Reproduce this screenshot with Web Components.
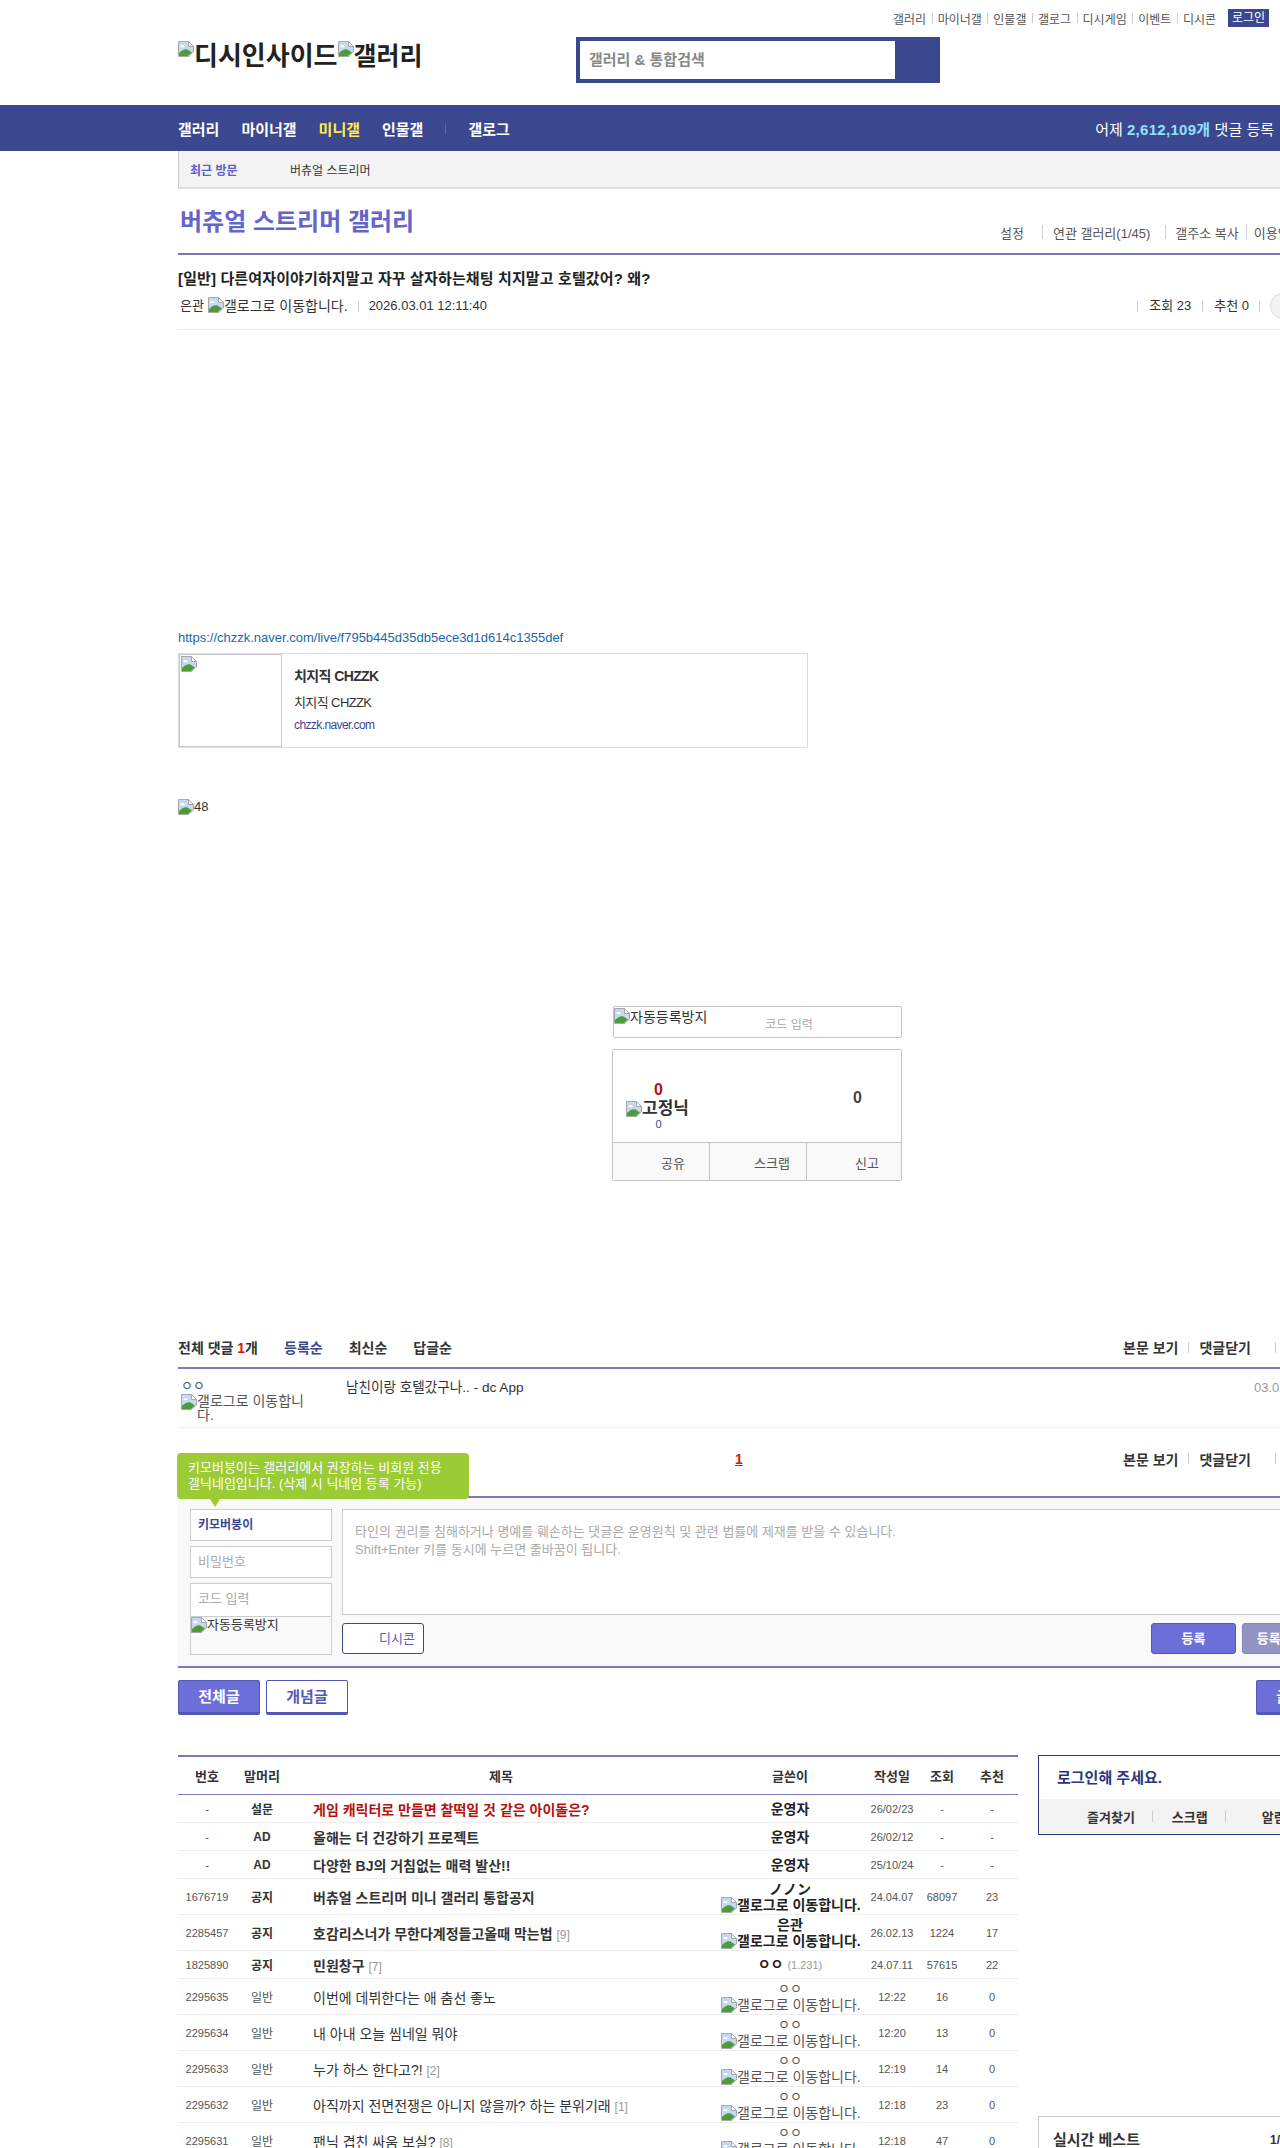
<!DOCTYPE html>
<html lang="ko">
<head>
<meta charset="utf-8">
<title>버츄얼 스트리머 갤러리</title>
<style>
    html, body {
        margin: 0;
        width: 1280px;
        height: 2148px;
        overflow: hidden;
        background: #fff;
    }
    body {
        font-family: "Liberation Sans", "Noto Sans CJK KR", sans-serif;
        font-size: 12px;
        color: #333;
    }
    main {
        display: block;
        width: 1160px;
        margin-left: 178px;
    }
</style>
</head>
<body>

<dc-header></dc-header>
<dc-nav></dc-nav>
<main>
    <dc-recent></dc-recent>
    <dc-gall-title></dc-gall-title>
    <dc-post></dc-post>
    <dc-comments></dc-comments>
    <dc-comment-form></dc-comment-form>
    <dc-tabs></dc-tabs>
    <dc-board>
        <dc-list>
            <dc-row no="-" head="설문" writer="운영자" date="26/02/23" view="-" rec="-" type="survey">게임 캐릭터로 만들면 찰떡일 것 같은 아이돌은?</dc-row>
            <dc-row no="-" head="AD" writer="운영자" date="26/02/12" view="-" rec="-" type="notice">올해는 더 건강하기 프로젝트</dc-row>
            <dc-row no="-" head="AD" writer="운영자" date="25/10/24" view="-" rec="-" type="notice">다양한 BJ의 거침없는 매력 발산!!</dc-row>
            <dc-row no="1676719" head="공지" writer="ノノン" gallog date="24.04.07" view="68097" rec="23" type="notice">버츄얼 스트리머 미니 갤러리 통합공지</dc-row>
            <dc-row no="2285457" head="공지" writer="은관" gallog date="26.02.13" view="1224" rec="17" type="notice" reply="9">호감리스너가 무한다계정들고올때 막는법</dc-row>
            <dc-row no="1825890" head="공지" writer="ㅇㅇ" ip="(1.231)" date="24.07.11" view="57615" rec="22" type="notice" reply="7">민원창구</dc-row>
            <dc-row no="2295635" head="일반" writer="ㅇㅇ" gallog date="12:22" view="16" rec="0">이번에 데뷔한다는 애 춤선 좋노</dc-row>
            <dc-row no="2295634" head="일반" writer="ㅇㅇ" gallog date="12:20" view="13" rec="0">내 아내 오늘 씸네일 뭐야</dc-row>
            <dc-row no="2295633" head="일반" writer="ㅇㅇ" gallog date="12:19" view="14" rec="0" reply="2">누가 하스 한다고?!</dc-row>
            <dc-row no="2295632" head="일반" writer="ㅇㅇ" gallog date="12:18" view="23" rec="0" reply="1">아직까지 전면전쟁은 아니지 않을까? 하는 분위기래</dc-row>
            <dc-row no="2295631" head="일반" writer="ㅇㅇ" gallog date="12:18" view="47" rec="0" reply="8">팬닉 겹친 싸움 보실?</dc-row>
        </dc-list>
        <dc-side slot="side"></dc-side>
    </dc-board>
</main>

<script>
// chrome's broken image picture, alt text sits next to it
class BrokenImg extends HTMLElement {

    constructor(){
        super();
        this.attachShadow({ mode : 'open' });
    }

    connectedCallback(){
        this.shadowRoot.innerHTML = `
            <style>
                :host{
                    display: inline-block;
                }
                svg{
                    float: left;
                    width: 16px;
                    height: 16px;
                }
            </style>
            <svg viewBox="0 0 16 16">
                <path d="M0.5 0.5H10.5L15.5 5.5V11L11 15.5H0.5Z" fill="#c5d8f5" stroke="#a8a8a8"/>
                <path d="M10.5 0.5V5.5H15.5Z" fill="#fff" stroke="#a8a8a8"/>
                <path d="M2 5.5c1-2 3.5-2 5 0c-1 .8-4 1-5 0z" fill="#fff"/>
                <path d="M1 15V12C4 9 7 7.5 9.5 8.5L14 11.5L10 15Z" fill="#4c9c38"/>
                <path d="M11 16L16 11V16Z" fill="#fff"/>
            </svg><slot></slot>
        `;
    }
}
customElements.define('dc-broken', BrokenImg);


class Header extends HTMLElement {

    constructor(){
        super();
        this.attachShadow({ mode : 'open' });
        this.shadowRoot.innerHTML = `
            <style>
                :host{
                    display: block;
                    height: 105px;
                    padding-left: 178px;
                    box-sizing: border-box;
                }
                .util{
                    display: flex;
                    justify-content: flex-end;
                    align-items: center;
                    width: 1091px;
                    height: 18px;
                    padding-top: 9px;
                    font-size: 12px;
                    color: #555;
                }
                .util span + span{
                    margin-left: 5.5px;
                    padding-left: 6px;
                    background: linear-gradient(#ccc, #ccc) left center / 1px 10px no-repeat;
                }
                .login{
                    margin-left: 12px;
                    width: 41px;
                    height: 18px;
                    line-height: 18px;
                    text-align: center;
                    background: #3b4890;
                    color: #fff;
                }
                .row{
                    display: flex;
                    margin-top: 10px;
                }
                .logo{
                    width: 398px;
                    font-size: 25px;
                    line-height: 30px;
                    color: #222;
                    padding-top: 4px;
                    white-space: nowrap;
                    font-weight: bold;
                }
                .logo .main{
                    font-size: 26px;
                }
                .search{
                    display: flex;
                    width: 364px;
                    height: 46px;
                    box-sizing: border-box;
                    border: 4px solid #3b4890;
                    background: #3b4890;
                }
                .input{
                    width: 315px;
                    background: #fff;
                    padding-left: 9px;
                    box-sizing: border-box;
                    font-size: 15px;
                    font-weight: bold;
                    line-height: 38px;
                    color: #888;
                }
            </style>
            <div class="util">
                <span>갤러리</span><span>마이너갤</span><span>인물갤</span><span>갤로그</span><span>디시게임</span><span>이벤트</span><span>디시콘</span>
                <div class="login">로그인</div>
            </div>
            <div class="row">
                <div class="logo"><dc-broken class="main">디시인사이드</dc-broken><dc-broken>갤러리</dc-broken></div>
                <div class="search"><div class="input">갤러리 &amp; 통합검색</div></div>
            </div>
        `;
    }
}
customElements.define('dc-header', Header);


class Nav extends HTMLElement {

    constructor(){
        super();
        this.attachShadow({ mode : 'open' });
        this.shadowRoot.innerHTML = `
            <style>
                :host{
                    display: flex;
                    align-items: center;
                    height: 46px;
                    padding-left: 178px;
                    background: #3b4890;
                    color: #fff;
                    font-size: 15px;
                    font-weight: bold;
                    white-space: nowrap;
                }
                .menu{
                    display: flex;
                    align-items: center;
                    gap: 22px;
                }
                .on{
                    color: #ffec4b;
                }
                .sep{
                    width: 1px;
                    height: 11px;
                    background: #5a66a8;
                }
                .total{
                    margin-left: auto;
                    margin-right: 6px;
                    font-size: 15px;
                    font-weight: normal;
                }
                .total b{
                    color: #8fe3ff;
                    letter-spacing: .3px;
                }
            </style>
            <div class="menu">
                <span>갤러리</span><span>마이너갤</span><span class="on">미니갤</span><span>인물갤</span>
                <i class="sep"></i>
                <span>갤로그</span>
            </div>
            <div class="total">어제 <b>2,612,109개</b> 댓글 등록</div>
        `;
    }
}
customElements.define('dc-nav', Nav);


class Recent extends HTMLElement {

    constructor(){
        super();
        this.attachShadow({ mode : 'open' });
        this.shadowRoot.innerHTML = `
            <style>
                :host{
                    display: flex;
                    align-items: center;
                    height: 36px;
                    background: #f3f3f3;
                    border-left: 1px solid #ccc;
                    border-bottom: 2px solid #ddd;
                    font-size: 12px;
                }
                b{
                    width: 100px;
                    padding-left: 11px;
                    color: #5b5dc9;
                }
            </style>
            <b>최근 방문</b><span>버츄얼 스트리머</span>
        `;
    }
}
customElements.define('dc-recent', Recent);


class GallTitle extends HTMLElement {

    constructor(){
        super();
        this.attachShadow({ mode : 'open' });
        this.shadowRoot.innerHTML = `
            <style>
                :host{
                    display: flex;
                    height: 64px;
                    padding-left: 2px;
                    border-bottom: 2px solid #7b79b8;
                    white-space: nowrap;
                }
                h2{
                    margin: 17px 0 0;
                    font-size: 24px;
                    line-height: 32px;
                    color: #6465c9;
                }
                .links{
                    display: flex;
                    align-items: center;
                    align-self: flex-end;
                    height: 12px;
                    margin-bottom: 15px;
                    margin-left: auto;
                    width: 338px;
                    font-size: 13px;
                    color: #555;
                }
                i{
                    width: 1px;
                    height: 14px;
                    background: #ccc;
                    margin: 0 9px;
                }
            </style>
            <h2>버츄얼 스트리머 갤러리</h2>
            <div class="links">
                <span style="margin-right:9px">설정</span><i style="margin-right:10px"></i><span>연관 갤러리(1/45)</span><i style="margin-left:15px"></i><span>갤주소 복사</span><i style="margin:0 7px"></i><span>이용안내</span>
            </div>
        `;
    }
}
customElements.define('dc-gall-title', GallTitle);


class LinkCard extends HTMLElement {

    constructor(){
        super();
        this.attachShadow({ mode : 'open' });
        this.shadowRoot.innerHTML = `
            <style>
                :host{
                    display: flex;
                    width: 630px;
                    height: 95px;
                    box-sizing: border-box;
                    border: 1px solid #ddd;
                }
                .thumb{
                    width: 103px;
                    box-sizing: border-box;
                    border: 1px solid #c8c8c8;
                    padding: 1px;
                }
                .txt{
                    padding-left: 12px;
                    letter-spacing: -0.6px;
                }
                .t{
                    margin-top: 13px;
                    font-size: 14px;
                    font-weight: bold;
                    line-height: 18px;
                }
                .d{
                    margin-top: 9px;
                    font-size: 13px;
                    line-height: 18px;
                    color: #333;
                }
                .u{
                    margin-top: 4px;
                    font-size: 12px;
                    line-height: 18px;
                    color: #3b4890;
                }
            </style>
            <div class="thumb"><dc-broken></dc-broken></div>
            <div class="txt">
                <div class="t">치지직 CHZZK</div>
                <div class="d">치지직 CHZZK</div>
                <div class="u">chzzk.naver.com</div>
            </div>
        `;
    }
}
customElements.define('dc-link-card', LinkCard);


class VoteBox extends HTMLElement {

    constructor(){
        super();
        this.attachShadow({ mode : 'open' });
        this.shadowRoot.innerHTML = `
            <style>
                :host{
                    display: block;
                    width: 290px;
                    margin-left: 434px;
                }
                .code{
                    display: flex;
                    height: 32px;
                    box-sizing: border-box;
                    margin-left: 1px;
                    border: 1px solid #c4c4c4;
                    border-radius: 2px;
                    font-size: 14px;
                    line-height: 18px;
                    white-space: nowrap;
                }
                .code dc-broken{
                    margin-top: 1px;
                    height: 18px;
                }
                .code em{
                    margin: 9px 0 0 58px;
                    font-style: normal;
                    font-size: 12px;
                    color: #aaa;
                }
                .vote{
                    margin-top: 11px;
                    height: 132px;
                    box-sizing: border-box;
                    border: 1px solid #c4c4c4;
                    border-radius: 2px;
                }
                .nums{
                    display: flex;
                    height: 93px;
                    box-sizing: border-box;
                    border-bottom: 1px solid #c4c4c4;
                }
                .up{
                    width: 100px;
                    padding-left: 13px;
                    box-sizing: border-box;
                    text-align: center;
                    white-space: nowrap;
                }
                .up b{
                    display: block;
                    margin-top: 30px;
                    font-size: 16px;
                    line-height: 20px;
                    color: #b5120d;
                    padding-right: 22px;
                }
                .up dc-broken{
                    display: block;
                    margin-top: 1px;
                    font-size: 17px;
                    font-weight: bold;
                    line-height: 16px;
                    text-align: left;
                }
                .up small{
                    display: block;
                    font-size: 11px;
                    line-height: 14px;
                    color: #3b4890;
                    padding-right: 22px;
                }
                .down{
                    margin: 38px 0 0 140px;
                    font-size: 16px;
                    font-weight: bold;
                    line-height: 20px;
                    color: #444;
                }
                .btns{
                    display: flex;
                    height: 37px;
                    background: #f9f9f9;
                    font-size: 13px;
                    line-height: 41px;
                    color: #555;
                }
                .btns span{
                    box-sizing: border-box;
                    text-align: right;
                }
                .btns span + span{
                    border-left: 1px solid #c4c4c4;
                }
            </style>
            <div class="code"><dc-broken>자동등록방지</dc-broken><em>코드 입력</em></div>
            <div class="vote">
                <div class="nums">
                    <div class="up">
                        <b>0</b>
                        <dc-broken>고정닉</dc-broken>
                        <small>0</small>
                    </div>
                    <div class="down">0</div>
                </div>
                <div class="btns">
                    <span style="width:96px;padding-right:24px">공유</span>
                    <span style="width:97px;padding-right:16px">스크랩</span>
                    <span style="width:95px;padding-right:22px">신고</span>
                </div>
            </div>
        `;
    }
}
customElements.define('dc-vote', VoteBox);


class Post extends HTMLElement {

    constructor(){
        super();
        this.attachShadow({ mode : 'open' });
        this.shadowRoot.innerHTML = `
            <style>
                :host{
                    display: block;
                }
                h3{
                    margin: 15px 0 0;
                    font-size: 15px;
                    line-height: 18px;
                    letter-spacing: .13px;
                    color: #222;
                    white-space: nowrap;
                }
                .meta{
                    display: flex;
                    align-items: center;
                    height: 20px;
                    margin-top: 8px;
                    padding-left: 2px;
                    padding-bottom: 13px;
                    border-bottom: 1px solid #eee;
                    font-size: 13px;
                    line-height: 18px;
                    white-space: nowrap;
                }
                .meta i{
                    width: 1px;
                    height: 11px;
                    background: #ccc;
                    margin: 0 10px;
                }
                .meta .wide{
                    margin: 0 11px;
                }
                .meta dc-broken{
                    margin-left: 4px;
                    font-size: 14px;
                }
                .right{
                    display: flex;
                    align-items: center;
                    margin-left: auto;
                    padding-right: 42px;
                }
                .round{
                    width: 24px;
                    height: 24px;
                    border: 1px solid #ddd;
                    border-radius: 50%;
                    background: #f3f3f3;
                    flex: none;
                }
                .link{
                    margin-top: 300px;
                    font-size: 13px;
                    line-height: 16px;
                    color: #1a66ae;
                }
                dc-link-card{
                    margin-top: 7px;
                }
                .img48{
                    margin-top: 51px;
                    height: 16px;
                    font-size: 13px;
                    line-height: 16px;
                }
                dc-vote{
                    margin-top: 191px;
                }
            </style>
            <h3>[일반] 다른여자이야기하지말고 자꾸 살자하는채팅 치지말고 호텔갔어? 왜?</h3>
            <div class="meta">
                <span>은관</span><dc-broken>갤로그로 이동합니다.</dc-broken><i></i><span>2026.03.01 12:11:40</span>
                <div class="right"><i class="wide"></i><span>조회 23</span><i class="wide"></i><span>추천 0</span><i></i><div class="round"></div></div>
            </div>
            <div class="link">https://chzzk.naver.com/live/f795b445d35db5ece3d1d614c1355def</div>
            <dc-link-card></dc-link-card>
            <div class="img48"><dc-broken>48</dc-broken></div>
            <dc-vote></dc-vote>
        `;
    }
}
customElements.define('dc-post', Post);


class Comments extends HTMLElement {

    constructor(){
        super();
        this.attachShadow({ mode : 'open' });
        this.shadowRoot.innerHTML = `
            <style>
                :host{
                    display: block;
                    margin-top: 152px;
                }
                .head{
                    display: flex;
                    align-items: center;
                    height: 28px;
                    padding-bottom: 6px;
                    border-bottom: 2px solid #7b79b8;
                    font-size: 14px;
                    font-weight: bold;
                    white-space: nowrap;
                }
                .head em{
                    font-style: normal;
                    color: #d31900;
                }
                .sort{
                    margin-left: 26px;
                }
                .blue{
                    color: #3b4890;
                }
                .tools{
                    display: flex;
                    align-items: center;
                    margin-left: auto;
                    width: 215px;
                }
                .tools i{
                    width: 1px;
                    height: 11px;
                    background: #ccc;
                    margin: 0 10px;
                    flex: none;
                }
                .row{
                    display: flex;
                    height: 58px;
                    border-bottom: 1px solid #eee;
                    white-space: nowrap;
                }
                .nick{
                    width: 125px;
                    flex: none;
                    box-sizing: border-box;
                    padding: 9px 0 0 3px;
                    font-size: 13px;
                    line-height: 16px;
                    white-space: normal;
                    color: #555;
                }
                .nick dc-broken{
                    font-size: 14px;
                    line-height: 14px;
                    display: block;
                    width: 124px;
                }
                .txt{
                    flex: none;
                    width: 908px;
                    padding: 11px 0 0 43px;
                    font-size: 13.6px;
                    line-height: 16px;
                }
                .date{
                    margin-top: 11px;
                    font-size: 13px;
                    line-height: 16px;
                    color: #999;
                }
                .bar{
                    display: flex;
                    align-items: center;
                    height: 61px;
                    padding-bottom: 7px;
                    font-size: 14px;
                    font-weight: bold;
                    white-space: nowrap;
                }
                .page{
                    margin-left: 557px;
                    color: #d31900;
                    text-decoration: underline;
                }
            </style>
            <div class="head">
                <span>전체 댓글 <em>1</em>개</span>
                <span class="sort blue">등록순</span><span class="sort">최신순</span><span class="sort">답글순</span>
                <div class="tools"><span>본문 보기</span><i></i><span>댓글닫기</span><i style="margin-left:24px"></i></div>
            </div>
            <div class="row">
                <div class="nick">ㅇㅇ<dc-broken>갤로그로 이동합니다.</dc-broken></div>
                <div class="txt">남친이랑 호텔갔구나.. - dc App</div>
                <div class="date">03.01 12:30:11</div>
            </div>
            <div class="bar">
                <span class="page">1</span>
                <div class="tools"><span>본문 보기</span><i></i><span>댓글닫기</span><i style="margin-left:24px"></i></div>
            </div>
        `;
    }
}
customElements.define('dc-comments', Comments);


class CommentForm extends HTMLElement {

    constructor(){
        super();
        this.attachShadow({ mode : 'open' });
        this.shadowRoot.innerHTML = `
            <style>
                :host{
                    display: flex;
                    position: relative;
                    height: 157px;
                    padding: 11px 0 0 12px;
                    background: #f9f9f9;
                    border-top: 2px solid #7b79b8;
                    border-bottom: 2px solid #7b79b8;
                    font-size: 13px;
                    white-space: nowrap;
                }
                .tip{
                    position: absolute;
                    left: -1px;
                    top: -45px;
                    width: 292px;
                    height: 46px;
                    box-sizing: border-box;
                    padding: 7px 11px;
                    background: #9bcb35;
                    border-radius: 4px;
                    color: #fff;
                    font-size: 13px;
                    line-height: 16px;
                }
                .tip::after{
                    content: "";
                    position: absolute;
                    left: 33px;
                    top: 46px;
                    border: 5px solid transparent;
                    border-top: 8px solid #9bcb35;
                    border-bottom: 0;
                }
                .left{
                    width: 142px;
                    flex: none;
                }
                .field{
                    height: 32px;
                    box-sizing: border-box;
                    margin-bottom: 5px;
                    padding-left: 7px;
                    background: #fff;
                    border: 1px solid #ccc;
                    line-height: 30px;
                    color: #aaa;
                }
                .field.nick{
                    color: #3b4890;
                    font-size: 12px;
                    font-weight: bold;
                }
                .field.code{
                    margin: 0;
                    height: 33px;
                    border-bottom: 0;
                }
                .captcha{
                    height: 39px;
                    box-sizing: border-box;
                    border: 1px solid #ccc;
                    line-height: 16px;
                }
                .right{
                    flex: none;
                    width: 994px;
                    margin-left: 10px;
                }
                .area{
                    height: 106px;
                    box-sizing: border-box;
                    padding: 13px 12px;
                    background: #fff;
                    border: 1px solid #ccc;
                    line-height: 18px;
                    color: #aaa;
                }
                .btns{
                    display: flex;
                    align-items: flex-start;
                    margin-top: 8px;
                }
                .dccon{
                    width: 82px;
                    height: 31px;
                    box-sizing: border-box;
                    padding-left: 36px;
                    background: #fff;
                    border: 1px solid #3b4890;
                    border-radius: 3px;
                    line-height: 29px;
                    color: #5b5dc9;
                }
                .submit{
                    width: 85px;
                    height: 31px;
                    box-sizing: border-box;
                    background: #6d6fd8;
                    border: 1px solid #5557b4;
                    border-radius: 3px;
                    line-height: 29px;
                    text-align: center;
                    color: #fff;
                    font-weight: bold;
                    margin-left: 6px;
                }
                .submit.first{
                    margin-left: 727px;
                }
                .submit.dim{
                    background: #9393c4;
                    border-color: #8585bb;
                }
            </style>
            <div class="tip">키모버붕이는 갤러리에서 권장하는 비회원 전용<br>갤닉네임입니다. (삭제 시 닉네임 등록 가능)</div>
            <div class="left">
                <div class="field nick">키모버붕이</div>
                <div class="field">비밀번호</div>
                <div class="field code">코드 입력</div>
                <div class="captcha"><dc-broken>자동등록방지</dc-broken></div>
            </div>
            <div class="right">
                <div class="area">타인의 권리를 침해하거나 명예를 훼손하는 댓글은 운영원칙 및 관련 법률에 제재를 받을 수 있습니다.<br>Shift+Enter 키를 동시에 누르면 줄바꿈이 됩니다.</div>
                <div class="btns">
                    <div class="dccon">디시콘</div>
                    <div class="submit first">등록</div>
                    <div class="submit dim">등록+개념</div>
                </div>
            </div>
        `;
    }
}
customElements.define('dc-comment-form', CommentForm);


class Tabs extends HTMLElement {

    constructor(){
        super();
        this.attachShadow({ mode : 'open' });
        this.shadowRoot.innerHTML = `
            <style>
                :host{
                    display: flex;
                    gap: 6px;
                    margin-top: 12px;
                    font-size: 15px;
                    font-weight: bold;
                }
                div{
                    width: 82px;
                    height: 35px;
                    box-sizing: border-box;
                    border: 1px solid #5557b4;
                    border-bottom-width: 3px;
                    border-radius: 2px;
                    background: #6d6fd8;
                    color: #fff;
                    line-height: 31px;
                    text-align: center;
                    white-space: nowrap;
                }
                .off{
                    background: #fff;
                    color: #5557b4;
                }
                .write{
                    margin-left: 902px;
                }
            </style>
            <div>전체글</div><div class="off">개념글</div><div class="write">글쓰기</div>
        `;
    }
}
customElements.define('dc-tabs', Tabs);


class Board extends HTMLElement {

    constructor(){
        super();
        this.attachShadow({ mode : 'open' });
        this.shadowRoot.innerHTML = `
            <style>
                :host{
                    display: flex;
                    gap: 20px;
                    margin-top: 40px;
                }
                .list{
                    flex: none;
                    width: 840px;
                }
            </style>
            <div class="list"><slot></slot></div>
            <slot name="side"></slot>
        `;
    }
}
customElements.define('dc-board', Board);


class List extends HTMLElement {

    constructor(){
        super();
        this.attachShadow({ mode : 'open' });
        this.shadowRoot.innerHTML = `
            <style>
                :host{
                    display: block;
                    border-top: 2px solid #7b79b8;
                }
                .head{
                    display: grid;
                    grid-template-columns: 58px 52px 426px 152px 52px 48px 52px;
                    align-items: center;
                    height: 37px;
                    border-bottom: 1px solid #7b79b8;
                    font-size: 13px;
                    font-weight: bold;
                    text-align: center;
                    color: #333;
                }
            </style>
            <div class="head"><span>번호</span><span>말머리</span><span>제목</span><span>글쓴이</span><span>작성일</span><span>조회</span><span>추천</span></div>
            <slot></slot>
        `;
    }
}
customElements.define('dc-list', List);


class Row extends HTMLElement {

    constructor(){
        super();
        this.attachShadow({ mode : 'open' });
    }

    connectedCallback(){
        this.render();
    }

    render() {
        const type = this.getAttribute('type') || '';
        const reply = this.getAttribute('reply');
        const ip = this.getAttribute('ip');
        const bold = type !== '';
        const tall = this.hasAttribute('gallog');

        this.shadowRoot.innerHTML = `
            <style>
                :host{
                    display: grid;
                    grid-template-columns: 58px 52px 426px 152px 52px 48px 52px;
                    align-items: center;
                    height: ${tall ? 35 : 27}px;
                    border-bottom: 1px solid #eee;
                    font-size: 11px;
                    text-align: center;
                    white-space: nowrap;
                    color: #555;
                }
                .head{
                    font-size: 12px;
                    ${bold ? 'font-weight: bold; color: #333;' : ''}
                }
                .title{
                    padding-left: 25px;
                    text-align: left;
                    font-size: 14px;
                    color: ${type === 'survey' ? '#b5120d' : '#333'};
                    ${bold ? 'font-weight: bold;' : ''}
                }
                .title em{
                    font-style: normal;
                    font-weight: normal;
                    font-size: 12px;
                    color: #999;
                }
                .writer{
                    font-size: ${bold ? 14 : 13}px;
                    line-height: 16px;
                    ${bold ? 'font-weight: bold; color: #222;' : 'color: #555;'}
                }
                .writer small{
                    font-size: 11px;
                    font-weight: normal;
                    color: #999;
                }
                dc-broken{
                    display: block;
                    width: 141px;
                    margin-left: 7px;
                    text-align: left;
                    font-size: 14px;
                }
            </style>
            <span>${this.getAttribute('no')}</span>
            <span class="head">${this.getAttribute('head')}</span>
            <span class="title"><slot></slot>${reply ? ` <em>[${reply}]</em>` : ''}</span>
            <div class="writer">
                ${this.getAttribute('writer')}${ip ? ` <small>${ip}</small>` : ''}
                ${tall ? '<dc-broken>갤로그로 이동합니다.</dc-broken>' : ''}
            </div>
            <span>${this.getAttribute('date')}</span>
            <span>${this.getAttribute('view')}</span>
            <span>${this.getAttribute('rec')}</span>
        `;
    }
}
customElements.define('dc-row', Row);


class Side extends HTMLElement {

    constructor(){
        super();
        this.attachShadow({ mode : 'open' });
        this.shadowRoot.innerHTML = `
            <style>
                :host{
                    display: block;
                    width: 300px;
                    white-space: nowrap;
                }
                .login{
                    height: 78px;
                    border: 1px solid #29367c;
                }
                .login p{
                    margin: 0;
                    height: 43px;
                    padding-left: 18px;
                    font-size: 15px;
                    font-weight: bold;
                    line-height: 44px;
                    color: #29367c;
                }
                .links{
                    display: flex;
                    align-items: center;
                    height: 35px;
                    padding-left: 48px;
                    background: #f3f3f3;
                    font-size: 13px;
                    font-weight: bold;
                }
                .links i{
                    width: 1px;
                    height: 11px;
                    background: #ccc;
                    margin: 0 19px 0 17px;
                }
                .links i + span + i{
                    margin-right: 36px;
                }
                .best{
                    display: flex;
                    margin-top: 281px;
                    height: 60px;
                    padding: 14px 0 0 14px;
                    box-sizing: border-box;
                    border: 1px solid #ccc;
                    font-size: 15px;
                    font-weight: bold;
                    line-height: 18px;
                }
                .best span{
                    margin-left: 130px;
                    font-size: 12px;
                }
            </style>
            <div class="login">
                <p>로그인해 주세요.</p>
                <div class="links"><span>즐겨찾기</span><i></i><span>스크랩</span><i></i><span>알림</span></div>
            </div>
            <div class="best">실시간 베스트<span>1/5</span></div>
        `;
    }
}
customElements.define('dc-side', Side);
</script>
</body>
</html>
